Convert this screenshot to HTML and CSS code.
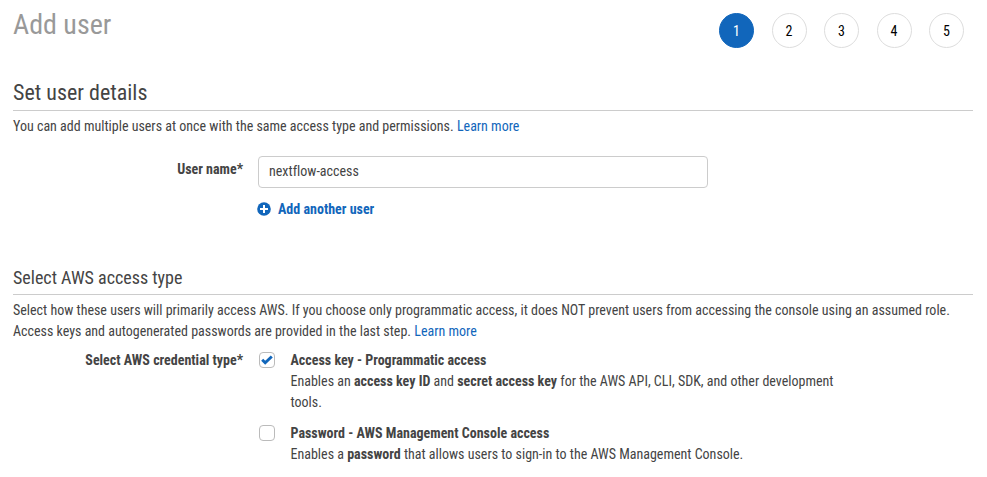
FILE: index.html
```html
<!DOCTYPE html>
<html lang="en">
<head>
<meta charset="utf-8">
<title>Add user</title>
<link rel="stylesheet" href="styles.css">
</head>
<body>
<main class="page">
  <header class="top">
    <h1>Add user</h1>
    <ol class="steps"><li class="current">1</li><li>2</li><li>3</li><li>4</li><li>5</li></ol>
  </header>
  <section class="details">
    <h2>Set user details</h2>
    <p class="intro">You can add multiple users at once with the same access type and permissions. <a>Learn more</a></p>
    <div class="row user">
      <label class="label" for="name">User name*</label>
      <div class="field">
        <input id="name" type="text" value="nextflow-access">
        <a class="add"><svg width="14" height="14" viewBox="0 0 14 14"><circle cx="7" cy="7" r="6.8" fill="#1166bb"/><path d="M7 3v8M3 7h8" stroke="#fff" stroke-width="2"/></svg><b>Add another user</b></a>
      </div>
    </div>
  </section>
  <section class="access">
    <h3>Select AWS access type</h3>
    <p class="intro">Select how these users will primarily access AWS. If you choose only programmatic access, it does NOT prevent users from accessing the console using an assumed role.<br>Access keys and autogenerated passwords are provided in the last step. <a>Learn more</a></p>
    <div class="row types">
      <div class="label">Select AWS credential type*</div>
      <div class="options">
        <div class="option">
          <span class="box"><svg width="14" height="14" viewBox="0 0 14 14"><path d="M2.200 6.800l3 3L11.800 3.500" fill="none" stroke="#1166bb" stroke-width="2.900"/></svg></span>
          <p><b>Access key - Programmatic access</b><br>Enables an <b>access key ID</b> and <b>secret access key</b> for the AWS API, CLI, SDK, and other development<br>tools.</p>
        </div>
        <div class="option">
          <span class="box"></span>
          <p><b>Password - AWS Management Console access</b><br>Enables a <b>password</b> that allows users to sign-in to the AWS Management Console.</p>
        </div>
      </div>
    </div>
  </section>
</main>
</body>
</html>
```
FILE: styles.css
```css
* { box-sizing: border-box; }
body {
  margin: 0;
  background: #fff;
  color: #444;
  font: 14px/21px "Roboto Condensed", Roboto, sans-serif;
  font-stretch: 75%;
}
.page { padding: 0 14px 0 13px; }
h1, h2, h3, p, ol { margin: 0; padding: 0; font-weight: 400; }
a { color: #1166bb; }
.top {
  display: flex;
  justify-content: space-between;
  height: 77px;
  padding: 8px 9px 0 0;
}
h1 { font-size: 28px; line-height: 33px; color: #999; }
.steps { display: flex; gap: 17.5px; margin-top: 5px; list-style: none; }
.steps li {
  width: 35px;
  height: 35px;
  border: 1px solid #ddd;
  border-radius: 50%;
  color: #000;
  line-height: 35px;
  text-align: center;
}
.steps .current { background: #1166bb; border-color: #1166bb; color: #fff; }
h2 {
  height: 34px;
  border-bottom: 1px solid #ccc;
  font-size: 22px;
  line-height: 31px;
}
h3 {
  height: 30px;
  border-bottom: 1px solid #ccc;
  font-size: 18px;
  line-height: 25px;
}
.intro { padding-top: 5px; white-space: nowrap; }
.row { display: flex; }
.label { width: 230px; text-align: right; font-weight: 700; }
.user { height: 109px; padding-top: 19px; }
.user .label { padding-top: 3px; }
.field { width: 450px; margin-left: 15px; }
input {
  display: block;
  width: 450px;
  height: 32px;
  padding: 0 10px 2px;
  border: 1px solid #ccc;
  border-radius: 4px;
  background: #fff;
  color: #444;
  font: inherit;
  font-variant-ligatures: none;
}
.add { display: flex; align-items: flex-start; gap: 7px; margin: 11px 0 0 -1px; }
.add svg { margin-top: 3px; }
.access { padding-top: 19px; }
.types { padding-top: 8px; }
.options { display: grid; gap: 10px; margin-left: 16px; }
.option { display: flex; gap: 15.5px; white-space: nowrap; }
.box {
  width: 16px;
  height: 16px;
  margin-top: 2px;
  border: 1px solid #bbb;
  border-radius: 4px;
}
.box svg { display: block; }
```
